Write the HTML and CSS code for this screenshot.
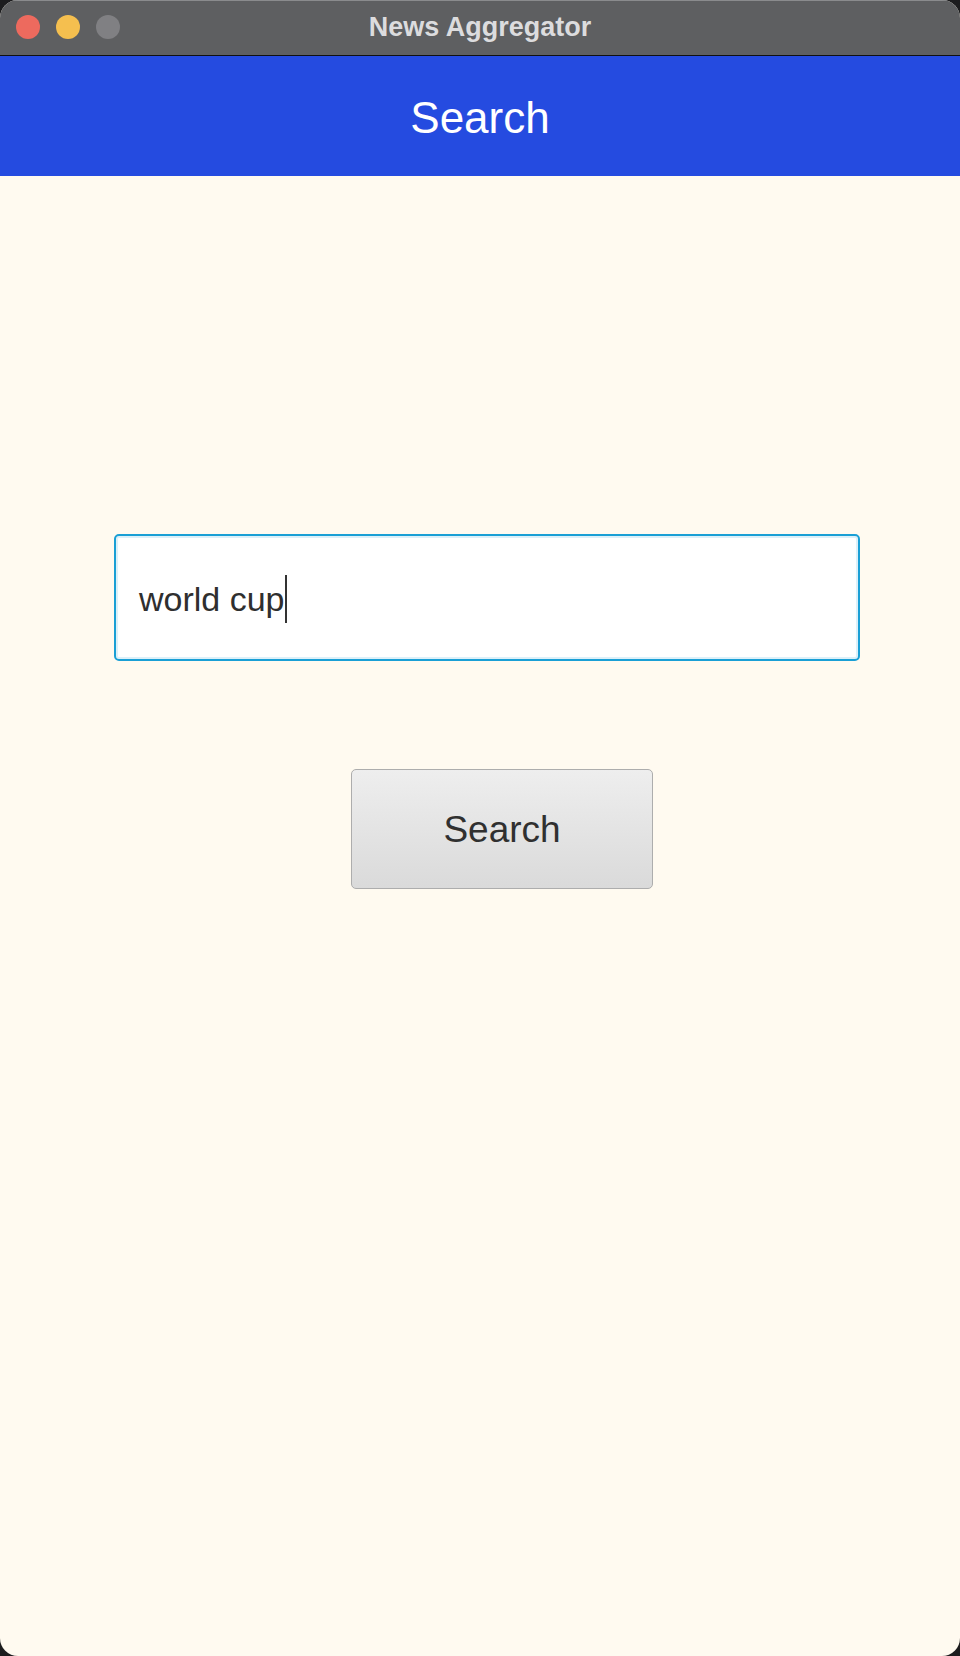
FILE: index.html
```html
<!DOCTYPE html>
<html lang="en">
<head>
<meta charset="utf-8">
<title>News Aggregator</title>
<link rel="stylesheet" href="styles.css">
</head>
<body>
<div class="window">
  <div class="titlebar">
    <div class="lights">
      <span class="light red"></span>
      <span class="light yellow"></span>
      <span class="light gray"></span>
    </div>
    <div class="title">News Aggregator</div>
  </div>
  <div class="header">Search</div>
  <div class="content">
    <div class="field"><span class="field-text">world cup</span><span class="caret"></span></div>
    <div class="btn-row"><button class="btn">Search</button></div>
  </div>
</div>
</body>
</html>
```

FILE: styles.css
```css
html, body {
  margin: 0;
  padding: 0;
  background: #1c1c1e;
}
body {
  width: 960px;
  height: 1656px;
  font-family: "Liberation Sans", Arial, sans-serif;
}
.window {
  width: 960px;
  height: 1656px;
  border-radius: 18px;
  overflow: hidden;
  background: #fffaf0;
  display: flex;
  flex-direction: column;
}
.titlebar {
  height: 55px;
  background: #5e5f61;
  border-bottom: 1px solid #111;
  box-shadow: inset 0 1px 0 #8a8b8d;
  display: flex;
  align-items: center;
  position: relative;
  flex: none;
}
.lights {
  display: flex;
  gap: 16px;
  padding-left: 16px;
  margin-top: -1px;
}
.light {
  width: 24px;
  height: 24px;
  border-radius: 50%;
  display: block;
}
.red { background: #ed6a5e; }
.yellow { background: #f5bf4f; }
.gray { background: #808083; }
.title {
  position: absolute;
  left: 0;
  right: 0;
  top: 0;
  bottom: 0;
  display: flex;
  align-items: center;
  justify-content: center;
  color: #dcdcde;
  font-weight: bold;
  font-size: 27px;
  margin-top: -1px;
}
.header {
  height: 120px;
  background: #254be0;
  color: #ffffff;
  font-size: 44px;
  display: flex;
  align-items: center;
  justify-content: center;
  flex: none;
  box-sizing: border-box;
  padding-top: 3px;
}
.content {
  flex: 1;
  display: flex;
  flex-direction: column;
  padding-top: 358px;
}
.field {
  margin-left: 114px;
  width: 746px;
  height: 127px;
  box-sizing: border-box;
  border: 2px solid #1a9fd5;
  border-radius: 5px;
  box-shadow: inset 0 0 0 2px #dcf0f9;
  background: #ffffff;
  display: flex;
  align-items: center;
  padding-left: 23px;
  padding-top: 4px;
  color: #2f2f2f;
  font-size: 34px;
}
.caret {
  display: inline-block;
  width: 2px;
  height: 48px;
  background: #333;
  margin-left: 0;
  margin-top: -2px;
}
.btn-row {
  display: flex;
  padding-top: 108px;
  padding-left: 351px;
}
.btn {
  width: 302px;
  height: 120px;
  border: 1.5px solid #adadad;
  border-radius: 5px;
  background: linear-gradient(#eeeeee, #dadada);
  color: #303030;
  font-family: "Liberation Sans", Arial, sans-serif;
  font-size: 37px;
  padding: 0;
  padding-top: 2px;
  cursor: default;
}
```
